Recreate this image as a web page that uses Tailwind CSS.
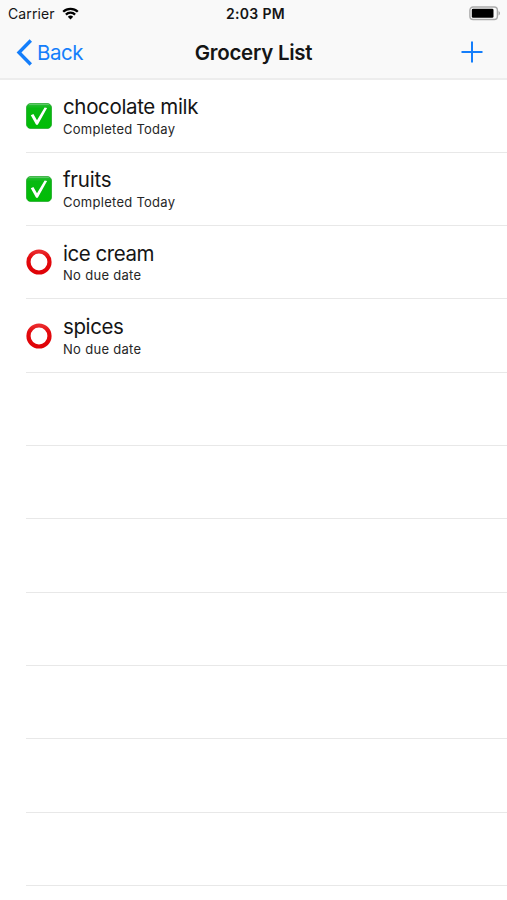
<!DOCTYPE html>
<html lang="en">
<head>
<meta charset="utf-8">
<title>Grocery List</title>
<script src="https://cdn.jsdelivr.net/npm/@tailwindcss/browser@4"></script>
</head>
<body class="h-[900px] w-[507px] overflow-hidden bg-white text-[#151515] font-[Inter,'Liberation_Sans',sans-serif]">
<svg class="absolute size-0">
  <defs>
    <linearGradient id="green" x1="0" y1="0" x2="0" y2="1"><stop offset="0" stop-color="#2fbd3c"/><stop offset=".2" stop-color="#08b911"/><stop offset="1" stop-color="#00bd05"/></linearGradient>
    <linearGradient id="red" x1="0" y1="0" x2="0" y2="1"><stop offset="0" stop-color="#ea2a2c"/><stop offset=".3" stop-color="#e30a0e"/><stop offset="1" stop-color="#df0207"/></linearGradient>
    <symbol id="done" viewBox="0 0 26 26">
      <rect x=".4" y=".4" width="25.2" height="25.2" rx="4.5" fill="url(#green)" stroke="#12a01b" stroke-width=".7"/>
      <path d="M3.5 1.5h19" stroke="#6fcc78" stroke-width=".7" stroke-linecap="round"/>
      <path d="M4.8 12.2l2.6-1.1 3.6 6.2L18.6 4.6l2.5.4-9.3 16.8h-1.7z" fill="#fff"/>
    </symbol>
    <symbol id="open" viewBox="0 0 26 26"><circle cx="13" cy="13" r="10.5" fill="none" stroke="url(#red)" stroke-width="4.2"/></symbol>
  </defs>
</svg>
<header class="flex h-20 flex-col border-b-2 border-[#ededed] bg-[#f9f9f9]">
  <div class="grid h-[27px] grid-cols-3 items-center pr-[7px] pl-2 leading-none">
    <div class="flex items-center gap-[7px]">
      <span class="pt-px text-[14px] tracking-[0.1px]">Carrier</span>
      <svg class="h-[13px] w-[17px]" viewBox="0 0 17 13" fill="none" stroke="#000" stroke-width="2.3"><path d="M1.2 4.8a10.4 10.4 0 0 1 14.6 0M3.9 7.6a6.5 6.5 0 0 1 9.2 0"/><path d="M8.5 12.4L5.8 9.7a3.9 3.9 0 0 1 5.4 0z" fill="#000" stroke="none"/></svg>
    </div>
    <span class="pt-px pl-[3px] text-center text-[14px] font-semibold tracking-[0.3px]">2:03 PM</span>
    <svg class="h-[15px] w-8 justify-self-end" viewBox="0 0 32 15"><rect x="1.9" y="1" width="27.5" height="12.5" rx="3.2" fill="#fcfcfc" stroke="#aaa" stroke-width="1.4"/><rect x="3.8" y="2.8" width="21.7" height="9" rx="1.3" fill="#000"/><path d="M30.5 5v4.6c1.1-.5 1.5-1.3 1.5-2.3s-.4-1.8-1.5-2.3z" fill="#aaa"/></svg>
  </div>
  <div class="grid flex-1 grid-cols-[1fr_auto_1fr] items-center pr-[24px] pb-px pl-4 text-[20.5px] leading-none">
    <div class="flex items-center gap-[5px] text-[#147efb]">
      <svg class="h-[27px] w-4" viewBox="0 0 16 27" fill="none" stroke="currentColor" stroke-width="3.4"><path d="M14.8 1.5L3 13.5l11.8 12"/></svg>
      <span class="pt-[2px] tracking-[-0.5px]">Back</span>
    </div>
    <h1 class="pt-[2px] pl-2 text-center font-semibold tracking-[-0.25px] whitespace-nowrap">Grocery List</h1>
    <svg class="size-[22px] justify-self-end text-[#147efb]" viewBox="0 0 22 22" stroke="currentColor" stroke-width="2"><path d="M11 .5v21M.5 11h21"/></svg>
  </div>
</header>
<ul class="-mt-[0.5px] grid auto-rows-[73.32px] pl-[26px]">
  <li class="flex items-center gap-[11px] border-b border-[#e8e8e8]"><svg class="size-[26px]"><use href="#done"/></svg><div class="pt-[2px]"><p class="text-[20.5px] leading-[24px] tracking-[-0.35px]">chocolate milk</p><p class="text-[13px] leading-[20px] tracking-[0.27px] text-[#262626]">Completed Today</p></div></li>
  <li class="flex items-center gap-[11px] border-b border-[#e8e8e8]"><svg class="size-[26px]"><use href="#done"/></svg><div class="pt-[2px]"><p class="text-[20.5px] leading-[24px] tracking-[-0.25px]">fruits</p><p class="text-[13px] leading-[20px] tracking-[0.27px] text-[#262626]">Completed Today</p></div></li>
  <li class="flex items-center gap-[11px] border-b border-[#e8e8e8]"><svg class="size-[26px]"><use href="#open"/></svg><div class="pt-[3px]"><p class="text-[20.5px] leading-[24px] tracking-[-0.45px]">ice cream</p><p class="text-[13px] leading-[19px] tracking-[0.3px] text-[#262626]">No due date</p></div></li>
  <li class="flex items-center gap-[11px] border-b border-[#e8e8e8]"><svg class="size-[26px]"><use href="#open"/></svg><div class="pt-[3px]"><p class="text-[20.5px] leading-[24px] tracking-[-0.4px]">spices</p><p class="text-[13px] leading-[20px] tracking-[0.3px] text-[#262626]">No due date</p></div></li>
  <li class="border-b border-[#e8e8e8]"></li>
  <li class="border-b border-[#e8e8e8]"></li>
  <li class="border-b border-[#e8e8e8]"></li>
  <li class="border-b border-[#e8e8e8]"></li>
  <li class="border-b border-[#e8e8e8]"></li>
  <li class="border-b border-[#e8e8e8]"></li>
  <li class="border-b border-[#e8e8e8]"></li>
</ul>
</body>
</html>
